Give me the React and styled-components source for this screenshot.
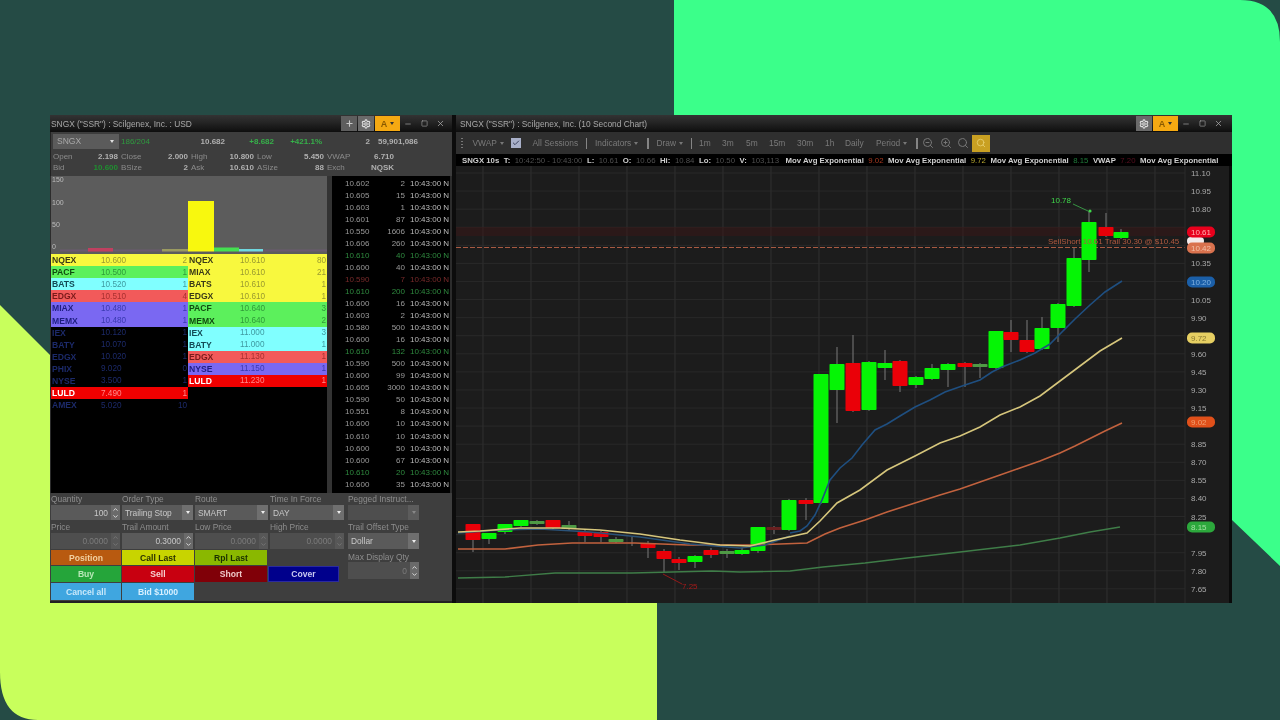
import React from 'react';
import styled, { createGlobalStyle } from 'styled-components';
import { Plus, Settings, Minus, Square, X, ZoomIn, ZoomOut, Search, Check, ChevronUp, ChevronDown } from 'lucide-react';

const Global = createGlobalStyle`
  html, body { margin: 0; padding: 0; background: #254b45; }
  body { font-family: "Liberation Sans", Arial, sans-serif; }
`;

const Stage = styled.div`
  position: relative; width: 1280px; height: 720px; overflow: hidden;
  background: #254b45; padding: 115px 48px 0 50px; box-sizing: border-box;
`;
const Backdrop = styled.svg`position: absolute; inset: 0; width: 1280px; height: 720px;`;
const Win = styled.div`
  position: relative; display: flex; height: 488px; background: #0c0c0c; gap: 4px;
  filter: blur(0.42px);
`;
const LeftPanel = styled.section`display: flex; flex-direction: column; width: 402px; flex: none; background: #2c2c2c;`;
const RightPanel = styled.section`display: flex; flex-direction: column; width: 776px; flex: none; background: #1c1c1c;`;

const TitleBar = styled.header`
  display: flex; align-items: center; height: 17px; flex: none; padding-left: 1px;
  background: linear-gradient(#333 0%, #262626 40%, #0e0e0e 100%);
  color: #a8a8a8; font-size: 8.4px; white-space: nowrap;
`;
const TitleText = styled.span`flex: 1; padding-left: ${p => p.$pad || 0}px;`;
const Ctl = styled.span`
  display: flex; align-items: center; justify-content: center; height: 15px; width: ${p => p.$w || 16}px;
  margin-right: ${p => p.$mr || 0}px;
  background: ${p => p.$bg || 'transparent'}; color: ${p => p.$c || '#aaa'}; font-size: 9px; font-weight: 700; flex: none;
`;
const Caret = styled.i`
  display: inline-block; width: 0; height: 0; margin-left: ${p => p.$ml ?? 3}px;
  border-left: 2.5px solid transparent; border-right: 2.5px solid transparent;
  border-top: 3px solid ${p => p.$c || '#9a9a9a'};
`;

const Quote = styled.div`
  height: 44px; flex: none; box-sizing: border-box; background: #3d3d3d; padding: 1px 0 0 2px;
  font-size: 8px; color: #8c8c8c; border-left: 1px solid #222;
`;
const QuoteTop = styled.div`
  display: grid; grid-template-columns: 68px 38px 66px 49px 48px 48px 48px; height: 16px; align-items: center;
  margin-bottom: 2px;
`;
const Ticker = styled.div`
  display: flex; align-items: center; justify-content: space-between; width: 66px; height: 15px;
  background: #5b5b5b; color: #a8a8a8; padding: 0 5px 0 4px; box-sizing: border-box; font-size: 8.5px;
`;
const QV = styled.span`
  text-align: ${p => p.$left ? 'left' : 'right'}; color: ${p => p.$c || '#b0b0b0'}; font-weight: ${p => p.$b ? 700 : 400};
`;
const QuoteGrid = styled.div`
  display: grid; grid-template-columns: 68px 70px 66px 70px 70px; grid-auto-rows: 11px; align-items: center;
`;
const Pair = styled.div`display: flex; justify-content: space-between; padding-right: 3px;`;

const Middle = styled.div`display: flex; height: 317px; flex: none;`;
const Book = styled.div`display: flex; flex-direction: column; width: 276px; margin-left: 1px; flex: none; background: #000;`;
const Histo = styled.svg`display: block; width: 276px; height: 78px; flex: none;`;
const Ladders = styled.div`display: grid; grid-template-columns: 137px 139px; align-items: start; flex: 1; background: #000;`;
const Ladder = styled.div`display: flex; flex-direction: column;`;
const LRow = styled.div`
  display: grid; grid-template-columns: 1fr 44px 42px; align-items: center; height: 12.1px; padding: 0 1px;
  background: ${p => p.$bg}; font-size: 8.2px; white-space: nowrap;
`;
const LName = styled.span`color: ${p => p.$c}; font-weight: 700; font-size: 8.6px;`;
const LPrice = styled.span`color: ${p => p.$c};`;
const LSize = styled.span`color: ${p => p.$c}; text-align: right;`;
const Gutter = styled.div`width: 5px; background: #333; flex: none;`;
const Tape = styled.div`
  width: 118px; flex: none; background: #000; overflow: hidden; padding-top: 1px; box-sizing: border-box;
  font-size: 8px;
`;
const TapeRow = styled.div`
  display: grid; grid-template-columns: 37px 36px 45px; height: 12.05px; align-items: center; white-space: nowrap;
  color: ${p => p.$c || '#9a9a9a'};
`;
const TPrice = styled.span`padding-left: 13px;`;
const TSize = styled.span`text-align: right;`;
const TTime = styled.span`padding-left: 5px; color: ${p => p.$c || '#bcbcbc'};`;

const OrderEntry = styled.div`
  display: flex; height: 108px; flex: none; background: #3e3e3e; padding-left: 1px; border-bottom: 2px solid #222;
  font-size: 8.4px; color: #8d8d8d; box-sizing: content-box;
`;
const OrderMain = styled.div`display: flex; flex-direction: column; width: 295px; flex: none;`;
const FieldGrid = styled.div`
  display: grid; grid-template-columns: 71px 73px 75px 76px; grid-template-rows: 12px 15px 13px 16px;
`;
const Lbl = styled.label`display: flex; align-items: ${p => p.$end ? 'flex-end' : 'center'}; color: ${p => p.$c || '#8d8d8d'}; white-space: nowrap;`;
const Field = styled.div`
  display: flex; align-items: center; justify-content: ${p => p.$right ? 'flex-end' : 'space-between'};
  margin-right: 2px; background: ${p => p.$off ? '#4e4e4e' : '#5a5a5a'};
  color: ${p => p.$off ? '#7c7c7c' : '#c8c8c8'}; padding-left: 3px; box-sizing: border-box; gap: 3px; white-space: nowrap;
`;
const Spin = styled.span`
  display: flex; flex-direction: column; align-items: center; justify-content: center; width: 9px; height: 100%; flex: none;
  background: ${p => p.$off ? '#575757' : '#6a6a6a'}; color: ${p => p.$off ? '#777' : '#e4e4e4'};
`;
const Drop = styled.span`
  display: flex; align-items: center; justify-content: center; width: 11px; height: 100%; flex: none;
  background: ${p => p.$off ? '#5c5c5c' : '#6f6f6f'};
`;
const Btns = styled.div`
  display: grid; grid-template-columns: 70px 72px 72px 71px; grid-template-rows: 15px 16px 17px; gap: 1px; margin-top: 1px;
`;
const Btn = styled.button`
  padding: 0; border: 0; background: ${p => p.$bg}; color: ${p => p.$c || '#eee'}; font: 700 8.6px "Liberation Sans", Arial, sans-serif;
  ${p => p.$line ? `box-shadow: inset 0 0 0 1px ${p.$line};` : ''}
`;
const OrderSide = styled.div`display: flex; flex-direction: column; width: 71px; margin-left: 2px;`;
const SideLabel = styled(Lbl)`height: ${p => p.$h}px;`;
const SideField = styled(Field)`height: ${p => p.$h}px; margin-right: 0;`;
const FarRight = styled.div`flex: 1;`;

const Toolbar = styled.div`
  display: flex; align-items: center; height: 22px; flex: none; background: #2f2f2f; font-size: 8.4px; color: #7a7a7a;
`;
const Tool = styled.span`
  display: inline-flex; align-items: center; margin-left: ${p => p.$ml}px; width: ${p => p.$w}px; white-space: nowrap; flex: none;
`;
const Sep = styled.span`width: 1.5px; height: 11px; background: #858585; margin-left: ${p => p.$ml}px; flex: none;`;
const Grip = styled.span`width: 1.5px; height: 11px; margin-left: 5px; flex: none; background: repeating-linear-gradient(#777 0 1.5px, transparent 1.5px 3px);`;
const CheckBox = styled.span`
  display: flex; align-items: center; justify-content: center; width: 10px; height: 10px; margin-left: ${p => p.$ml}px;
  background: #a9b0c9; color: #39405c; flex: none;
`;
const IconTool = styled.span`
  display: flex; align-items: center; justify-content: center; margin-left: ${p => p.$ml}px; width: ${p => p.$w || 14}px; height: ${p => p.$h || 14}px;
  color: ${p => p.$c || '#777'}; background: ${p => p.$bg || 'transparent'}; flex: none;
`;
const Legend = styled.div`
  display: flex; align-items: center; gap: 4.5px; height: 12px; flex: none; background: #000; padding-left: 6px;
  font-size: 7.8px; font-weight: 700; color: #cfcfcf; white-space: nowrap; overflow: hidden;
`;
const Dim = styled.span`color: ${p => p.$c || '#505050'}; font-weight: 400; margin-right: ${p => p.$mr || 0}px;`;
const ChartBox = styled.svg`display: block; width: 776px; height: 437px; flex: none;`;

const Y = '#f8f83e', G = '#5cf05c', C = '#80ffff', R = '#f25a5a', P = '#7a68f2', K = '#000', L = '#f00000';
const pal = {
  [Y]: ['#3a3a18', '#9a9a30'], [G]: ['#104a10', '#2f9a3a'], [C]: ['#134a55', '#3f9aa0'],
  [R]: ['#7a1a1a', '#a83030'], [P]: ['#1e1e80', '#3a3ab0'], [K]: ['#1c2a6a', '#1c2a6a'], [L]: ['#fff', '#ff8a8a'],
};
const bids = [
  ['NQEX','10.600','2',Y],['PACF','10.500','1',G],['BATS','10.520','1',C],['EDGX','10.510','4',R],['MIAX','10.480','1',P],['MEMX','10.480','1',P],
  ['IEX','10.120','1',K],['BATY','10.070','1',K],['EDGX','10.020','1',K],['PHIX','9.020','0',K],['NYSE','3.500','1',K],['LULD','7.490','1',L],['AMEX','5.020','10',K],
];
const asks = [
  ['NQEX','10.610','80',Y],['MIAX','10.610','21',Y],['BATS','10.610','1',Y],['EDGX','10.610','1',Y],['PACF','10.640','3',G],['MEMX','10.640','2',G],
  ['IEX','11.000','3',C],['BATY','11.000','1',C],['EDGX','11.130','1',R],['NYSE','11.150','1',P],['LULD','11.230','1',L],
];
const GR = '#2f8a3f', RD = '#7a2b2b';
const tape = [
  ['10.602','2'],['10.605','15'],['10.603','1'],['10.601','87'],['10.550','1606'],['10.606','260'],['10.610','40',GR],['10.600','40'],['10.590','7',RD],
  ['10.610','200',GR],['10.600','16'],['10.603','2'],['10.580','500'],['10.600','16'],['10.610','132',GR],['10.590','500'],['10.600','99'],['10.605','3000'],
  ['10.590','50'],['10.551','8'],['10.600','10'],['10.610','10'],['10.600','50'],['10.600','67'],['10.610','20',GR],['10.600','35'],
];

const candles = [
  [473,524,540,524,552,'r'],[489,533,539,533,544,'g'],[505,524,532,524,534,'g'],[521,520,526,520,527,'g'],[537,521,524,520,525,'d'],[553,520,528,520,529,'r'],
  [569,525,529,521,530,'d'],[585,532,536,530,542,'r'],[601,532,537,531,542,'r'],[616,539,542,537,543,'d'],[632,541,542,537,546,'w'],[648,543,548,541,558,'r'],
  [664,551,559,549,572,'r'],[679,559,563,557,570,'r'],[695,556,562,555,568,'g'],[711,550,555,548,558,'r'],[727,551,554,549,558,'d'],[742,550,554,548,555,'g'],
  [758,527,551,527,553,'g'],[774,527,530,526,534,'m'],[789,500,530,499,531,'g'],[806,500,504,498,520,'r'],[821,374,503,374,504,'g'],[837,364,390,347,423,'g'],
  [853,363,411,335,412,'r'],[869,362,410,361,411,'g'],[885,363,368,350,380,'g'],[900,361,386,360,392,'r'],[916,377,385,376,388,'g'],[932,368,379,364,380,'g'],
  [948,364,370,363,387,'g'],[965,363,367,362,387,'r'],[980,364,367,363,378,'d'],[996,331,368,331,369,'g'],[1011,332,340,320,352,'r'],[1027,340,352,320,353,'r'],
  [1042,328,349,317,350,'g'],[1058,304,328,303,342,'g'],[1074,258,306,248,307,'g'],[1089,222,260,211,272,'g'],[1106,227,236,213,237,'r'],[1121,232,238,229,239,'g'],
];
const cCol = { g: '#05f505', r: '#ea0008', d: '#4f9a45', m: '#6a2020', w: '#555' };
const blue = '790,533 800,531 807,526 815,515 822,500 830,480 840,468 852,458 862,445 875,430 887,424 900,416 915,407 930,400 945,392 965,385 980,380 992,372 1002,367 1020,360 1035,353 1050,344 1062,332 1075,319 1090,305 1105,292 1122,281';
const blueLeft = '458,533 500,530 540,529 590,532 640,537 690,544 740,548 765,545 790,536';
const yellow = '458,532 480,531 520,528 560,528 600,530 640,534 680,540 720,545 750,546 775,540 807,533 820,521 837,503 860,490 887,470 915,456 940,443 960,436 980,427 1000,415 1020,407 1040,396 1060,381 1080,366 1100,351 1122,338';
const orange = '458,549 505,549 538,545 572,543 615,543 635,543 688,545 752,545 780,544 807,543 825,534 840,528 865,520 887,512 915,503 940,495 960,489 980,482 1000,475 1020,468 1040,461 1060,453 1075,446 1087,440 1105,431 1122,423';
const green = '458,578 505,577 555,573 632,573 712,571 740,572 790,571 823,567 865,563 907,558 960,552 1020,545 1060,538 1090,532 1120,527';

const ticks = ['11.10','10.95','10.80','10.65','10.50','10.35','10.20','10.05','9.90','9.75','9.60','9.45','9.30','9.15','9.00','8.85','8.70','8.55','8.40','8.25','8.10','7.95','7.80','7.65'];
const hidden = new Set(['10.65','10.50','10.20','9.75','9.00','8.10']);
const tickY = i => 173 + i * 18.08;
const pills = [
  ['10.61', 232, '#e8001c', '#ffb0b0'], ['10.42', 248, '#d9724e', '#f2c0a8'], ['10.20', 282, '#1b5fa8', '#7fb0e0'],
  ['9.72', 338, '#e6cf62', '#8a7a30'], ['9.02', 422, '#e0501a', '#f0a070'], ['8.15', 527, '#2ca83c', '#a0e0a0'],
];
const verticals = Array.from({ length: 15 }, (_, i) => 1155 - i * 48);

const Txt = styled.text`font: ${p => p.$w || 400} ${p => p.$s || 8}px "Liberation Sans", Arial, sans-serif; fill: ${p => p.$f || '#a8a8a8'};`;

function Chart() {
  return (
    <ChartBox viewBox="456 166 776 437">
      <rect x="456" y="166" width="776" height="437" fill="#1c1c1c" />
      {ticks.map((t, i) => <line key={t} x1="456" x2="1185" y1={tickY(i)} y2={tickY(i)} stroke="#292929" strokeWidth="1" />)}
      {verticals.map(x => <line key={x} x1={x} x2={x} y1="166" y2="603" stroke="#2d2d2d" strokeWidth="1.2" />)}
      <rect x="456" y="227" width="729" height="9" fill="#3a1616" opacity="0.5" />
      <line x1="456" x2="1185" y1="247.5" y2="247.5" stroke="#a85a42" strokeWidth="1" strokeDasharray="5 2" />
      <line x1="1185" x2="1185" y1="166" y2="603" stroke="#2a2a2a" />
      <rect x="1229" y="166" width="3" height="437" fill="#0a0a0a" />
      {candles.map(([x, t, b, wt, wb, c]) => (
        <g key={x}>
          <line x1={x} x2={x} y1={wt} y2={wb} stroke="#666" strokeWidth="1.3" />
          {c !== 'w' && <rect x={x - 7.5} y={t} width="15" height={b - t} rx="0.8" fill={cCol[c]} />}
        </g>
      ))}
      <polyline points={green} fill="none" stroke="#3f7d48" strokeWidth="1.4" />
      <polyline points={orange} fill="none" stroke="#c2623e" strokeWidth="1.6" />
      <polyline points={blueLeft} fill="none" stroke="#2a5278" strokeWidth="1.5" />
      <polyline points={blue} fill="none" stroke="#1f4f80" strokeWidth="1.6" />
      <polyline points={yellow} fill="none" stroke="#d6c67c" strokeWidth="1.6" />
      <Txt x="1051" y="203" $f="#3fd84a" $s={8}>10.78</Txt>
      <polyline points="1073,204 1088,211" fill="none" stroke="#3aa048" strokeWidth="0.9" />
      <circle cx="1090" cy="211" r="1.6" fill="#3fd84a" />
      <Txt x="1048" y="244" $f="#b05a40" $s={8}>SellShort 10.61 Trail 30.30 @ $10.45</Txt>
      <polyline points="663,574 682,584" fill="none" stroke="#a01818" strokeWidth="0.9" />
      <Txt x="682" y="589" $f="#a81a1a" $s={8}>7.25</Txt>
      {ticks.map((t, i) => !hidden.has(t) && <Txt key={t} x="1191" y={tickY(i) + 3}>{t}</Txt>)}
      <rect x="1187" y="237" width="17" height="8" rx="4" fill="#f4eaea" />
      {pills.map(([t, y, bg, fg]) => (
        <g key={t}>
          <rect x="1187" y={y - 5.5} width="28" height="11" rx="5" fill={bg} />
          <Txt x="1191" y={y + 3} $f={fg}>{t}</Txt>
        </g>
      ))}
    </ChartBox>
  );
}

const WinCtl = ({ extra }) => (
  <>
    {extra}
    <Ctl $w={16} $mr={1} $bg="#6a6a6a" $c="#e0e0e0"><Settings size={10} strokeWidth={2.6} /></Ctl>
    <Ctl $w={25} $bg="#f5a912" $c="#8a5a00">A<Caret $c="#333" /></Ctl>
    <Ctl $w={16}><Minus size={8} strokeWidth={2} /></Ctl>
    <Ctl $w={16}><Square size={7} strokeWidth={2} /></Ctl>
    <Ctl $w={17}><X size={9} strokeWidth={2} /></Ctl>
  </>
);

const Up = () => <ChevronUp size={7} strokeWidth={3} />;
const Dn = () => <ChevronDown size={7} strokeWidth={3} />;
const SpinBox = ({ off }) => <Spin $off={off}><Up /><Dn /></Spin>;
const DropBox = ({ off }) => <Drop $off={off}><Caret $ml={0} $c={off ? '#888' : '#eee'} /></Drop>;

export default function App() {
  return (
    <Stage>
      <Global />
      <Backdrop viewBox="0 0 1280 720">
        <path d="M674 0H1240Q1280 0 1280 42V566L1232 520V116H674Z" fill="#3bff8a" />
        <path d="M0 305L50 355V603H657V720H38Q0 720 0 672Z" fill="#c8ff5c" />
      </Backdrop>
      <Win>
        <LeftPanel>
          <TitleBar>
            <TitleText>SNGX ("SSR") : Scilgenex, Inc. : USD</TitleText>
            <WinCtl extra={<Ctl $w={16} $mr={1} $bg="#5e5e5e" $c="#c8c8c8"><Plus size={9} strokeWidth={3} /></Ctl>} />
            <Ctl $w={3} />
          </TitleBar>
          <Quote>
            <QuoteTop>
              <Ticker>SNGX<Caret $ml={0} $c="#e0e0e0" /></Ticker>
              <QV $left $c="#2f9a3f">186/204</QV>
              <QV $b>10.682</QV>
              <QV $c="#36b04a" $b>+8.682</QV>
              <QV $c="#36b04a" $b>+421.1%</QV>
              <QV $b>2</QV>
              <QV $b>59,901,086</QV>
            </QuoteTop>
            <QuoteGrid>
              {[['Open','2.198'],['Close','2.000'],['High','10.800'],['Low','5.450'],['VWAP','6.710']].map(([a, b]) => (
                <Pair key={a}><span>{a}</span><QV $b>{b}</QV></Pair>
              ))}
              <Pair><span>Bid</span><QV $c="#1f8f30" $b>10.600</QV></Pair>
              {[['BSize','2'],['Ask','10.610'],['ASize','88'],['Exch','NQSK']].map(([a, b]) => (
                <Pair key={a}><span>{a}</span><QV $b>{b}</QV></Pair>
              ))}
            </QuoteGrid>
          </Quote>
          <Middle>
            <Book>
              <Histo viewBox="0 0 276 78">
                <rect width="276" height="78" fill="#5c5c5c" />
                <Txt x="1" y="6" $f="#bcbcbc" $s={7}>150</Txt>
                <Txt x="1" y="29" $f="#bcbcbc" $s={7}>100</Txt>
                <Txt x="1" y="51" $f="#bcbcbc" $s={7}>50</Txt>
                <Txt x="1" y="73" $f="#bcbcbc" $s={7}>0</Txt>
                <rect x="9" y="73.5" width="267" height="2" fill="#6a5a70" />
                <rect x="37" y="72" width="25" height="3.5" fill="#c04060" />
                <rect x="111" y="73" width="26" height="2.5" fill="#9a9a60" />
                <rect x="137" y="25" width="26" height="50.5" fill="#f8f80e" />
                <rect x="163" y="71.5" width="25" height="4" fill="#44e050" />
                <rect x="188" y="73" width="24" height="2.5" fill="#70d8e0" />
              </Histo>
              <Ladders>
                {[bids, asks].map((side, n) => (
                  <Ladder key={n}>
                    {side.map(([a, b, c, bg]) => (
                      <LRow key={a + b} $bg={bg}>
                        <LName $c={pal[bg][0]}>{a}</LName>
                        <LPrice $c={pal[bg][1]}>{b}</LPrice>
                        <LSize $c={pal[bg][1]}>{c}</LSize>
                      </LRow>
                    ))}
                  </Ladder>
                ))}
              </Ladders>
            </Book>
            <Gutter />
            <Tape>
              {tape.map(([p, s, c], i) => (
                <TapeRow key={i} $c={c}>
                  <TPrice>{p}</TPrice><TSize>{s}</TSize><TTime $c={c}>10:43:00 N</TTime>
                </TapeRow>
              ))}
            </Tape>
          </Middle>
          <OrderEntry>
            <OrderMain>
              <FieldGrid>
                <Lbl>Quantity</Lbl><Lbl>Order Type</Lbl><Lbl>Route</Lbl><Lbl>Time In Force</Lbl>
                <Field $right>100<SpinBox /></Field>
                <Field>Trailing Stop<DropBox /></Field>
                <Field>SMART<DropBox /></Field>
                <Field>DAY<DropBox /></Field>
                <Lbl>Price</Lbl><Lbl>Trail Amount</Lbl><Lbl>Low Price</Lbl><Lbl>High Price</Lbl>
                <Field $right $off>0.0000<SpinBox off /></Field>
                <Field $right>0.3000<SpinBox /></Field>
                <Field $right $off>0.0000<SpinBox off /></Field>
                <Field $right $off>0.0000<SpinBox off /></Field>
              </FieldGrid>
              <Btns>
                <Btn $bg="#b85a10" $c="#f2d0a0">Position</Btn>
                <Btn $bg="#c8d400" $c="#2a3000">Call Last</Btn>
                <Btn $bg="#8ab800" $c="#1a3000">Rpl Last</Btn>
                <span />
                <Btn $bg="#25a53a" $c="#b8e8b8">Buy</Btn>
                <Btn $bg="#c80010" $c="#f6d0d0">Sell</Btn>
                <Btn $bg="#800008" $c="#eec8c8">Short</Btn>
                <Btn $bg="#00008c" $c="#c8c8f0" $line="#2a2aa0">Cover</Btn>
                <Btn $bg="#3fa6e0" $c="#c8e8fa">Cancel all</Btn>
                <Btn $bg="#3fa6e0" $c="#d8f0ff">Bid $1000</Btn>
              </Btns>
            </OrderMain>
            <OrderSide>
              <SideLabel $h={12}>Pegged Instruct...</SideLabel>
              <SideField $h={15} $off><span />
                <DropBox off /></SideField>
              <SideLabel $h={13}>Trail Offset Type</SideLabel>
              <SideField $h={16}>Dollar<DropBox /></SideField>
              <SideLabel $h={13} $c="#8d8d8d" $end>Max Display Qty</SideLabel>
              <SideField $h={17} $right $off>0<SpinBox /></SideField>
            </OrderSide>
            <FarRight />
          </OrderEntry>
        </LeftPanel>
        <RightPanel>
          <TitleBar>
            <TitleText $pad={3}>SNGX ("SSR") : Scilgenex, Inc. (10 Second Chart)</TitleText>
            <WinCtl />
            <Ctl $w={5} />
          </TitleBar>
          <Toolbar>
            <Grip />
            <Tool $ml={10} $w={30}>VWAP<Caret $c="#777" /></Tool>
            <CheckBox $ml={8}><Check size={8} strokeWidth={3} /></CheckBox>
            <Tool $ml={12} $w={45}>All Sessions</Tool>
            <Sep $ml={8} />
            <Tool $ml={8} $w={44}>Indicators<Caret $c="#777" /></Tool>
            <Sep $ml={8} />
            <Tool $ml={8} $w={27}>Draw<Caret $c="#777" /></Tool>
            <Sep $ml={7} />
            <Tool $ml={7} $w={12}>1m</Tool>
            <Tool $ml={11} $w={13}>3m</Tool>
            <Tool $ml={11} $w={12}>5m</Tool>
            <Tool $ml={11} $w={18}>15m</Tool>
            <Tool $ml={10} $w={18}>30m</Tool>
            <Tool $ml={10} $w={11}>1h</Tool>
            <Tool $ml={9} $w={20}>Daily</Tool>
            <Tool $ml={11} $w={30}>Period<Caret $c="#777" /></Tool>
            <Sep $ml={10} />
            <IconTool $ml={3}><ZoomOut size={12} /></IconTool>
            <IconTool $ml={4}><ZoomIn size={12} /></IconTool>
            <IconTool $ml={3}><Search size={12} /></IconTool>
            <IconTool $ml={2} $w={18} $h={17} $bg="#c9a022" $c="#e8d070"><Search size={10} /></IconTool>
          </Toolbar>
          <Legend>
            <span>SNGX 10s</span>
            <span>T:</span><Dim>10:42:50 - 10:43:00</Dim>
            <span>L:</span><Dim>10.61</Dim>
            <span>O:</span><Dim>10.66</Dim>
            <span>Hi:</span><Dim>10.84</Dim>
            <span>Lo:</span><Dim>10.50</Dim>
            <span>V:</span><Dim $mr={2}>103,113</Dim>
            <span>Mov Avg Exponential</span><Dim $c="#a83a20">9.02</Dim>
            <span>Mov Avg Exponential</span><Dim $c="#b8a830">9.72</Dim>
            <span>Mov Avg Exponential</span><Dim $c="#1f7a3a">8.15</Dim>
            <span>VWAP</span><Dim $c="#5a1020">7.20</Dim>
            <span>Mov Avg Exponential</span>
          </Legend>
          <Chart />
        </RightPanel>
      </Win>
    </Stage>
  );
}
